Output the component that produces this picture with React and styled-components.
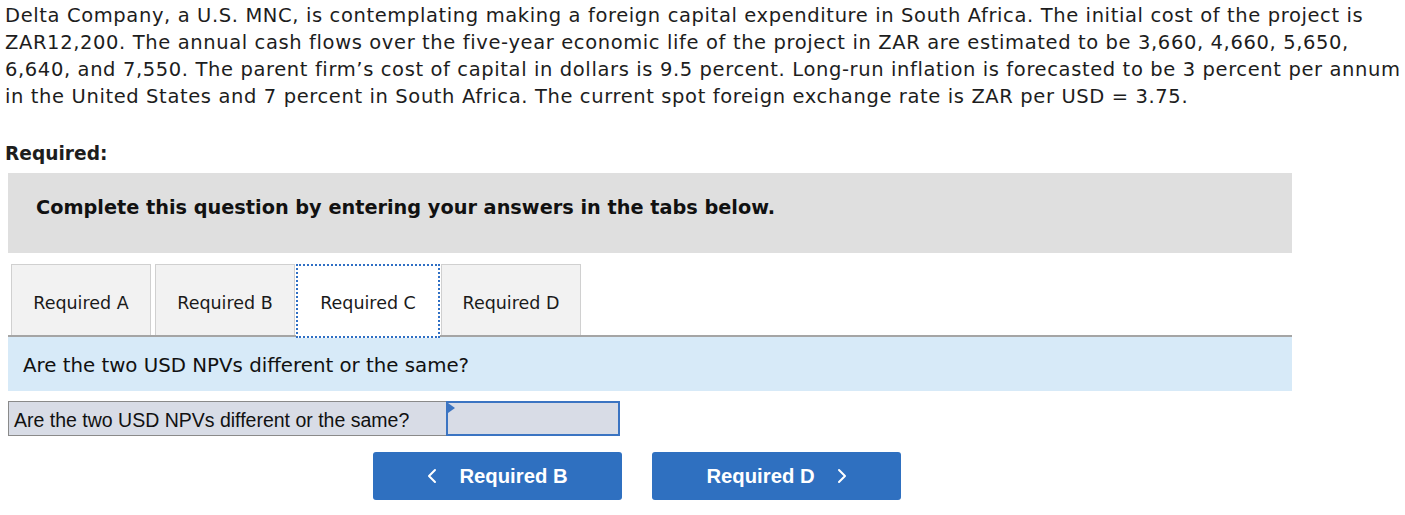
import React from "react";
import styled, { createGlobalStyle } from "styled-components";

const GlobalStyle = createGlobalStyle`
  body {
    margin: 0;
    background: #fff;
    color: #1a1a1a;
  }
`;

const Page = styled.div`
  width: 1405px;
  height: 515px;
  overflow: hidden;
  padding: 2px 0 0 5px;
  box-sizing: border-box;
`;

const Problem = styled.p`
  margin: 0;
  font-family: "DejaVu Sans", sans-serif;
  font-size: 19.5px;
  letter-spacing: 0.62px;
  line-height: 27px;
  color: #1d1d1d;
  white-space: nowrap;
`;

const RequiredLabel = styled.h3`
  margin: 32px 0 0;
  font-family: "DejaVu Sans", sans-serif;
  font-weight: 700;
  font-size: 18.6px;
  line-height: 24px;
  color: #1d1d1d;
`;

const Panel = styled.div`
  margin-left: 3px;
  width: 1284px;
`;

const Instruction = styled.div`
  margin-top: 7px;
  height: 80px;
  background: #dfdfdf;
  display: flex;
  align-items: center;
  padding: 0 0 12px 28px;
  box-sizing: border-box;
  font-family: "DejaVu Sans", Verdana, sans-serif;
  font-weight: 700;
  font-size: 19.3px;
  color: #111;
`;

const TabRow = styled.div`
  display: flex;
  margin-top: 11px;
  padding-left: 3px;
  border-bottom: 2px solid #a5a5a5;
  height: 71px;
`;

const Tab = styled.div`
  width: ${(p) => (p.$active ? "144px" : "140px")};
  margin-right: ${(p) => p.$gap}px;
  box-sizing: border-box;
  height: ${(p) => (p.$active ? "74px" : "71px")};
  padding-top: ${(p) => (p.$active ? "3px" : "5px")};
  display: flex;
  align-items: center;
  justify-content: center;
  background: ${(p) => (p.$active ? "#fff" : "#f2f2f2")};
  border: ${(p) => (p.$active ? "2px dotted #2f6fc4" : "1px solid #d0d0d0")};
  border-bottom: ${(p) => (p.$active ? "2px dotted #2f6fc4" : "none")};
  font-family: "DejaVu Sans", Verdana, sans-serif;
  font-size: 17.5px;
  color: #1a1a1a;
  position: relative;
  z-index: ${(p) => (p.$active ? 1 : 0)};
`;

const QuestionBar = styled.div`
  height: 54px;
  box-sizing: border-box;
  background: #d7eaf8;
  display: flex;
  align-items: center;
  padding: 3px 0 0 15px;
  font-family: "DejaVu Sans", Verdana, sans-serif;
  font-size: 19.8px;
  color: #111;
`;

const AnswerRow = styled.div`
  display: flex;
  margin-top: 10px;
  height: 35px;
`;

const AnswerLabel = styled.div`
  width: 438px;
  box-sizing: border-box;
  background: #d8dce6;
  border: 1px solid #8a8a8a;
  border-right: none;
  display: flex;
  align-items: center;
  padding: 3px 0 0 5px;
  font-family: "Liberation Sans", Arial, sans-serif;
  font-size: 19.5px;
  color: #111;
`;

const AnswerInput = styled.div`
  width: 174px;
  box-sizing: border-box;
  background: #d8dce6;
  border: 2px solid #3b74c2;
  position: relative;

  &::before {
    content: "";
    position: absolute;
    top: 0;
    left: 0;
    border-top: 5px solid transparent;
    border-bottom: 5px solid transparent;
    border-left: 7px solid #3b74c2;
  }
`;

const NavRow = styled.div`
  display: flex;
  gap: 30px;
  margin: 16px 0 0 365px;
`;

const NavButton = styled.button`
  width: 249px;
  height: 48px;
  border: none;
  border-radius: 3px;
  background: #2f70c0;
  color: #fff;
  font-family: "Liberation Sans", Arial, sans-serif;
  font-weight: 700;
  font-size: 20.3px;
  display: flex;
  align-items: center;
  justify-content: center;
  gap: 22px;
  cursor: pointer;
`;

const Chevron = ({ dir }) => (
  <svg width="10" height="16" viewBox="0 0 10 16" fill="none">
    <path
      d={dir === "left" ? "M8 2 L2 8 L8 14" : "M2 2 L8 8 L2 14"}
      stroke="#fff"
      strokeWidth="2"
      strokeLinecap="round"
      strokeLinejoin="round"
    />
  </svg>
);

const tabs = [
  { label: "Required A", gap: 4 },
  { label: "Required B", gap: 1 },
  { label: "Required C", gap: 1, active: true },
  { label: "Required D", gap: 0 },
];

const lines = [
  "Delta Company, a U.S. MNC, is contemplating making a foreign capital expenditure in South Africa. The initial cost of the project is",
  "ZAR12,200. The annual cash flows over the five-year economic life of the project in ZAR are estimated to be 3,660, 4,660, 5,650,",
  "6,640, and 7,550. The parent firm’s cost of capital in dollars is 9.5 percent. Long-run inflation is forecasted to be 3 percent per annum",
  "in the United States and 7 percent in South Africa. The current spot foreign exchange rate is ZAR per USD = 3.75.",
];

export default function App() {
  return (
    <Page>
      <GlobalStyle />
      <Problem>
        {lines.map((l, i) => (
          <React.Fragment key={i}>
            {l}
            {i < lines.length - 1 && <br />}
          </React.Fragment>
        ))}
      </Problem>
      <RequiredLabel>Required:</RequiredLabel>
      <Panel>
        <Instruction>
          Complete this question by entering your answers in the tabs below.
        </Instruction>
        <TabRow>
          {tabs.map((t) => (
            <Tab key={t.label} $active={t.active} $gap={t.gap}>
              {t.label}
            </Tab>
          ))}
        </TabRow>
        <QuestionBar>Are the two USD NPVs different or the same?</QuestionBar>
        <AnswerRow>
          <AnswerLabel>Are the two USD NPVs different or the same?</AnswerLabel>
          <AnswerInput />
        </AnswerRow>
        <NavRow>
          <NavButton>
            <Chevron dir="left" />
            Required B
          </NavButton>
          <NavButton>
            Required D
            <Chevron dir="right" />
          </NavButton>
        </NavRow>
      </Panel>
    </Page>
  );
}
